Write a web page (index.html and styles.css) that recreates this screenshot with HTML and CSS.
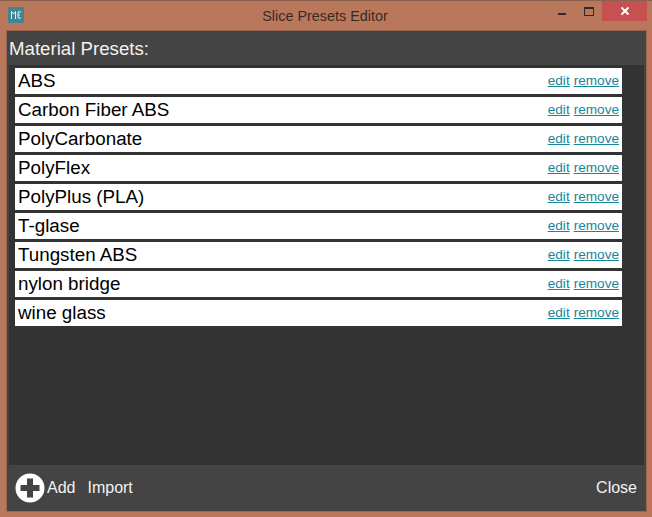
FILE: index.html
```html
<!DOCTYPE html>
<html lang="en">

<head>
  <meta charset="UTF-8">
  <title>Slice Presets Editor</title>
  <link rel="stylesheet" href="styles.css">
</head>

<body>

  <div class="window">
    <header class="titlebar">
      <svg class="titlebar__icon" width="16" height="16" viewBox="0 0 16 16">
        <rect width="16" height="16" rx="1.5" fill="#3f8593" />
        <path d="M3.500 12V4.500l2 2.500 2-2.500V12M13 5H10v6h3M10 8h2" fill="none" stroke="#e3f1f3" stroke-width="1" />
      </svg>
      <span class="titlebar__title">Slice Presets Editor</span>
      <div class="titlebar__controls">
        <span class="titlebar__min"></span>
        <span class="titlebar__max"></span>
        <span class="titlebar__close">
          <svg width="10" height="10" viewBox="0 0 10 10">
            <path d="M1.500 1.500l7 7M8.500 1.500l-7 7" stroke="#fff" stroke-width="2" />
          </svg>
        </span>
      </div>
    </header>

    <main class="panel">
      <h1 class="panel__heading">Material Presets:</h1>

      <div class="presets">
        <ul class="presets__list">
          <li class="preset"><span class="preset__name">ABS</span><a href="#">edit</a><a href="#">remove</a></li>
          <li class="preset"><span class="preset__name">Carbon Fiber ABS</span><a href="#">edit</a><a href="#">remove</a></li>
          <li class="preset"><span class="preset__name">PolyCarbonate</span><a href="#">edit</a><a href="#">remove</a></li>
          <li class="preset"><span class="preset__name">PolyFlex</span><a href="#">edit</a><a href="#">remove</a></li>
          <li class="preset"><span class="preset__name">PolyPlus (PLA)</span><a href="#">edit</a><a href="#">remove</a></li>
          <li class="preset"><span class="preset__name">T-glase</span><a href="#">edit</a><a href="#">remove</a></li>
          <li class="preset"><span class="preset__name">Tungsten ABS</span><a href="#">edit</a><a href="#">remove</a></li>
          <li class="preset"><span class="preset__name">nylon bridge</span><a href="#">edit</a><a href="#">remove</a></li>
          <li class="preset"><span class="preset__name">wine glass</span><a href="#">edit</a><a href="#">remove</a></li>
        </ul>
      </div>

      <footer class="toolbar">
        <span class="toolbar__add">
          <svg width="30" height="30" viewBox="0 0 30 30">
            <circle cx="15" cy="15" r="14.500" fill="#fff" />
            <path d="M15 5.500v19M5.500 15h19" stroke="#444" stroke-width="6" />
          </svg>
          Add
        </span>
        <span class="toolbar__import">Import</span>
        <span class="toolbar__close">Close</span>
      </footer>
    </main>
  </div>

</body>

</html>
```

FILE: styles.css
```css
*,
*:after,
*:before {
  margin: 0;
  padding: 0;
  box-sizing: border-box;
}

html,
body {
  height: 100%;
}

body {
  font-family: "Liberation Sans", Arial, sans-serif;
  background: #b9785c;
  overflow: hidden;
}

.window {
  height: 517px;
  display: flex;
  flex-direction: column;
  padding: 0 5px 5px 5px;
  border-top: 1px solid #8c6150;
}

.titlebar {
  height: 29px;
  flex: none;
  display: flex;
  align-items: center;
  position: relative;
  padding-left: 3px;
}

.titlebar__icon {
  flex: none;
  margin-top: -1px;
}

.titlebar__title {
  position: absolute;
  left: 0;
  right: 0;
  top: 7px;
  text-align: center;
  font-size: 14.4px;
  line-height: 16px;
  color: #3a2a22;
  padding-right: 2px;
}

.titlebar__controls {
  margin-left: auto;
  display: flex;
  height: 100%;
  align-items: flex-start;
  position: relative;
}

.titlebar__min {
  width: 8px;
  height: 2px;
  background: #2b2b2b;
  margin-top: 12px;
  margin-right: 18px;
}

.titlebar__max {
  width: 10px;
  height: 9px;
  border: 1px solid #2b2b2b;
  border-top-width: 2px;
  margin-top: 6px;
  margin-right: 8px;
}

.titlebar__close {
  width: 45px;
  height: 20px;
  background: #c75050;
  display: flex;
  align-items: center;
  justify-content: center;
}

.panel {
  flex: 1;
  min-height: 0;
  display: flex;
  flex-direction: column;
  background: #444;
  border: 1px solid #9a6650;
  margin-left: 1px;
  padding-left: 2px;
}

.panel__heading {
  font-size: 18.67px;
  font-weight: 400;
  line-height: 22px;
  color: #f2f2f2;
  padding: 7px 0 5px 0;
}

.presets {
  flex: 1;
  min-height: 0;
  background: #333;
  padding: 3px 22px 0 6px;
  margin-right: 2px;
}

.presets__list {
  list-style: none;
  display: flex;
  flex-direction: column;
  gap: 3px;
}

.preset {
  height: 26px;
  background: #fff;
  display: flex;
  align-items: center;
  padding: 0 3px;
  font-size: 13.6px;
  line-height: 15px;
}

.preset__name {
  font-size: 18.8px;
  line-height: 26px;
  color: #000;
  margin-right: auto;
}

.preset a {
  color: #17869b;
  margin-left: 4px;
  margin-top: -1px;
}

.toolbar {
  height: 46px;
  flex: none;
  display: flex;
  align-items: center;
  font-size: 16px;
  color: #f2f2f2;
  padding: 0 9px 0 6px;
}

.toolbar__add {
  display: flex;
  align-items: center;
  gap: 2px;
}

.toolbar__import {
  margin-left: 12px;
}

.toolbar__close {
  margin-left: auto;
}
```
